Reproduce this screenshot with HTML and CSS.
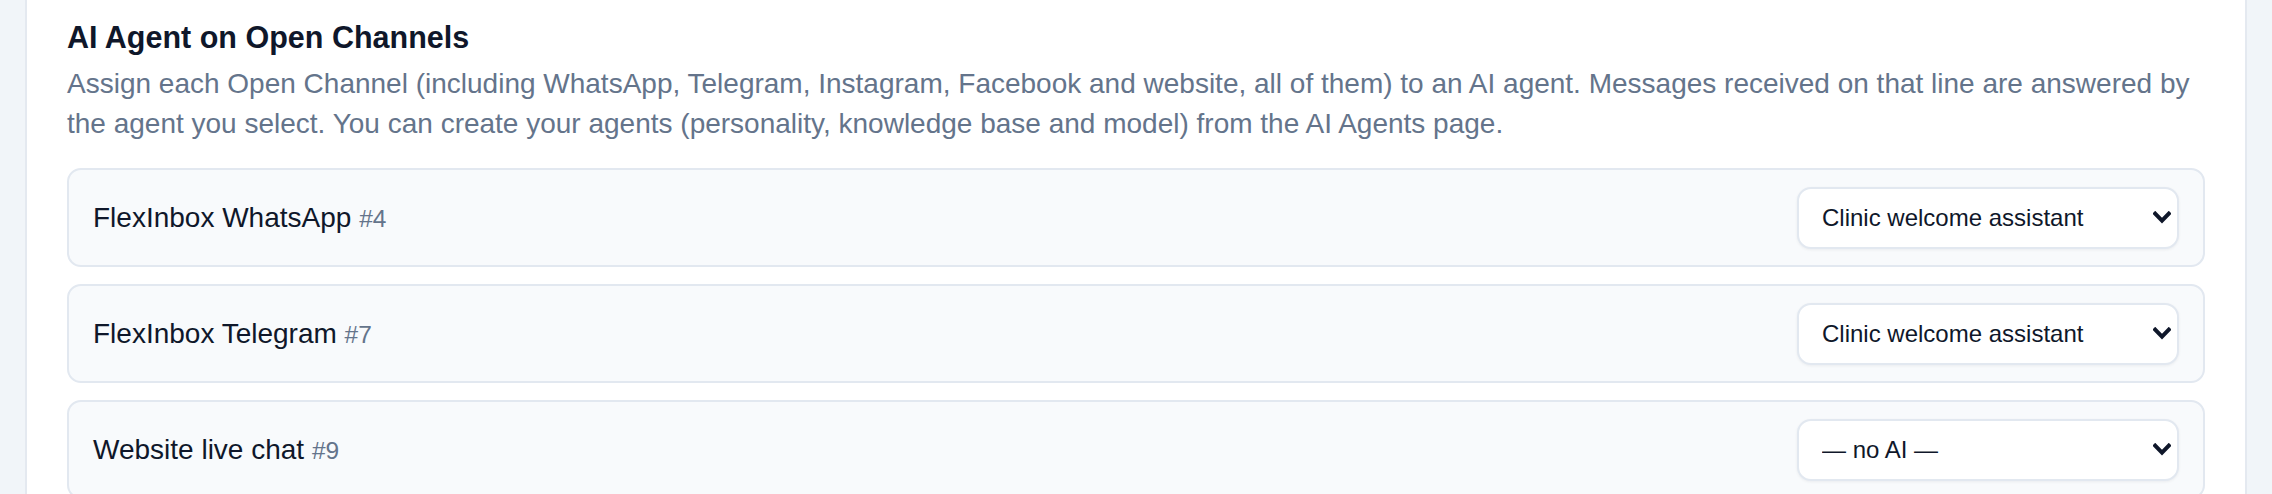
FILE: index.html
```html
<!DOCTYPE html>
<html lang="en">
<head>
<meta charset="utf-8">
<title>AI Agent on Open Channels</title>
<link rel="stylesheet" href="styles.css">
</head>
<body>
<div class="page">
  <section class="card">
    <h2 class="card-title">AI Agent on Open Channels</h2>
    <p class="card-desc">Assign each Open Channel (including WhatsApp, Telegram, Instagram, Facebook and website, all of them) to an AI agent. Messages received on that line are answered by the agent you select. You can create your agents (personality, knowledge base and model) from the AI Agents page.</p>
    <div class="channel-list">
      <div class="channel-row">
        <div class="channel-name">FlexInbox WhatsApp <span class="channel-id">#4</span></div>
        <select class="agent-select">
          <option>Clinic welcome assistant</option>
          <option>— no AI —</option>
        </select>
      </div>
      <div class="channel-row">
        <div class="channel-name">FlexInbox Telegram <span class="channel-id">#7</span></div>
        <select class="agent-select">
          <option>Clinic welcome assistant</option>
          <option>— no AI —</option>
        </select>
      </div>
      <div class="channel-row">
        <div class="channel-name">Website live chat <span class="channel-id">#9</span></div>
        <select class="agent-select">
          <option>— no AI —</option>
          <option>Clinic welcome assistant</option>
        </select>
      </div>
    </div>
  </section>
</div>
</body>
</html>
```
FILE: styles.css
```css
html, body {
  margin: 0;
  padding: 0;
  background: #f1f5f9;
  font-family: "Liberation Sans", Arial, sans-serif;
}

.page {
  padding: 0 25px 0 25px;
}

.card {
  background: #ffffff;
  border: 2px solid #e4e9f0;
  border-top: none;
  border-radius: 0 0 21px 21px;
  padding: 16px 40px 42px 40px;
}

.card-title {
  margin: 0;
  font-size: 30.5px;
  line-height: 42px;
  font-weight: 700;
  color: #0f172a;
}

.card-desc {
  margin: 6px 0 0 0;
  font-size: 28px;
  line-height: 40px;
  color: #64748b;
}

.channel-list {
  margin-top: 24px;
  display: flex;
  flex-direction: column;
  gap: 17px;
}

.channel-row {
  display: flex;
  align-items: center;
  justify-content: space-between;
  background: #f8fafc;
  border: 2px solid #e2e8f0;
  border-radius: 14px;
  padding: 16.5px 24px;
}

.channel-name {
  font-size: 28px;
  line-height: 40px;
  padding-top: 2px;
  color: #0f172a;
}

.channel-id {
  font-size: 24.5px;
  color: #64748b;
}

.agent-select {
  appearance: none;
  -webkit-appearance: none;
  width: 382px;
  height: 62px;
  box-sizing: border-box;
  border: 2px solid #e2e8f0;
  border-radius: 14px;
  background-color: #ffffff;
  background-image: url("data:image/svg+xml,%3Csvg xmlns='http://www.w3.org/2000/svg' width='18' height='13' viewBox='0 0 18 13'%3E%3Cpath d='M2.2 2.6 L9 9.6 L15.8 2.6' fill='none' stroke='%230f172a' stroke-width='4' stroke-linecap='square' stroke-linejoin='miter'/%3E%3C/svg%3E");
  background-repeat: no-repeat;
  background-position: right 6px center;
  background-size: 18px 13px;
  box-shadow: 0 1px 3px rgba(15, 23, 42, 0.06);
  padding: 0 40px 0 23px;
  font-family: "Liberation Sans", Arial, sans-serif;
  font-size: 24px;
  color: #0f172a;
}
```
